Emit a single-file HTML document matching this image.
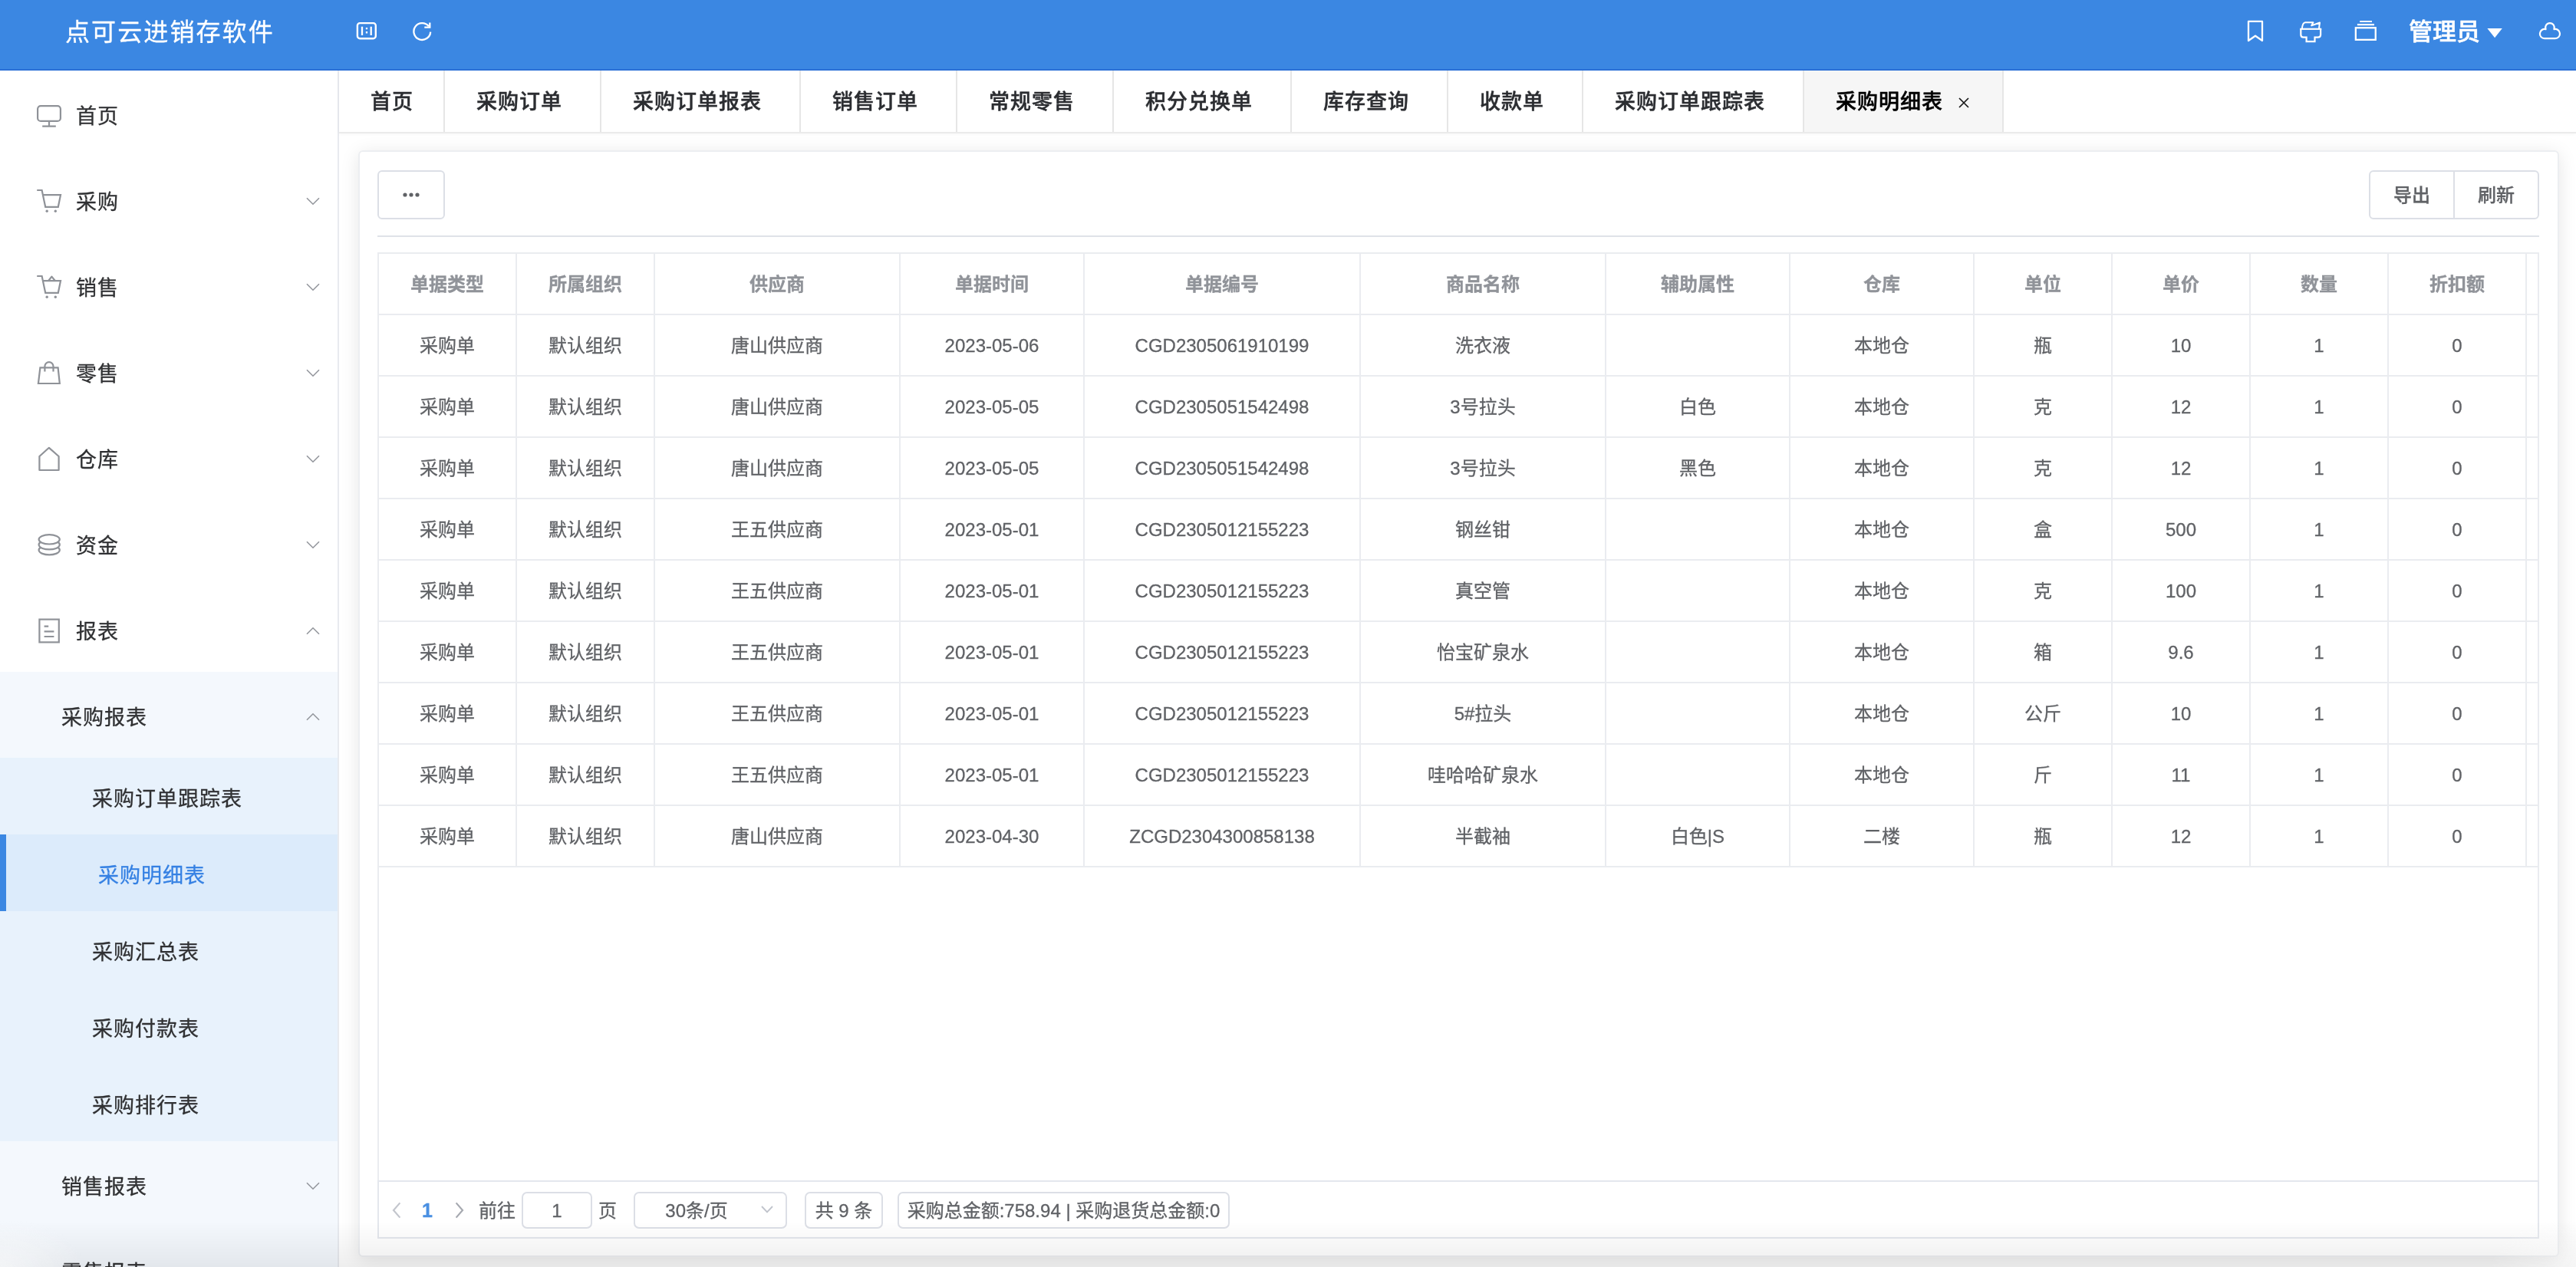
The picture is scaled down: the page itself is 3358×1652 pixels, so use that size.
<!DOCTYPE html>
<html lang="zh-CN">
<head>
<meta charset="utf-8">
<title>点可云进销存软件</title>
<style>
*{box-sizing:border-box;margin:0;padding:0}
html,body{width:3358px;height:1652px;overflow:hidden;background:#fff}
#hd,#sd,#tb,#tw,#pg,.btn{will-change:transform}
body{font-family:"Liberation Sans","Noto Sans CJK SC",sans-serif;color:#303133;position:relative;-webkit-text-stroke:.3px currentColor}
.abs{position:absolute}
svg{display:block;overflow:visible}

/* ---------- header ---------- */
#hd{position:absolute;left:0;top:0;width:3358px;height:92px;background:#3b87e2;border-bottom:2px solid #2a6fd6;z-index:5}
#hd .title{position:absolute;left:85px;top:0;height:84px;line-height:84px;font-size:32px;letter-spacing:2.1px;color:#fff;white-space:nowrap}
#hd .user{position:absolute;left:3140px;top:0;height:84px;line-height:84px;font-size:31px;font-weight:500;-webkit-text-stroke:.5px #fff;color:#fff;white-space:nowrap}
#hd .ic{position:absolute}

/* ---------- sidebar ---------- */
#sd{position:absolute;left:0;top:92px;width:442px;height:1560px;background:#fff;border-right:2px solid #e8eaef;overflow:hidden}
.mi{position:absolute;left:0;width:440px;height:112px;line-height:112px;font-size:27px;letter-spacing:1px;color:#303133;white-space:nowrap}
.mi .t{position:absolute;left:99px;top:4px}
.mi .ico{position:absolute;left:46px;top:40px;width:36px;height:36px}
.mi .arr{position:absolute;left:399px;top:53px;width:18px;height:11px}
.sub1{background:#f4f8fd}
.sub1 .t{left:80px}
.sub2{height:100px;line-height:100px;background:#e8f2fc}
.sub2 .t{left:120px}
.sub2.on{background:#dcebfb;color:#3580e3;border-left:8px solid #3b87e2}
.sub2.on .t{left:120px}

/* ---------- tabs ---------- */
#tb{position:absolute;left:442px;top:92px;width:2916px;height:82px;background:#fff;border-bottom:2px solid #ebebeb;box-shadow:0 1px 4px rgba(0,0,0,.04);z-index:3;white-space:nowrap;font-size:0}
.tab{display:inline-block;vertical-align:top;height:80px;line-height:81px;padding-top:1px;font-size:27px;letter-spacing:1px;font-weight:500;-webkit-text-stroke:.45px currentColor;color:#2b2d31;padding-left:41px;border-right:2px solid #e6e6e6;position:relative}
.tab.on{background:#f6f6f6;color:#000}
.tab .x{position:absolute;left:201px;top:35px;width:14px;height:14px}

/* ---------- main / card ---------- */
#mn{position:absolute;left:442px;top:174px;width:2916px;height:1478px;background:#fff}
#card{position:absolute;left:467px;top:196px;width:2869px;height:1443px;background:#fff;border:2px solid #eceef1;border-radius:6px;box-shadow:0 4px 24px rgba(0,0,0,.10);z-index:2}
.btn{position:absolute;height:64px;border:2px solid #dcdfe6;background:#fff;color:#606266;font-size:24px;font-weight:500;text-align:center;line-height:62px}
#hr{position:absolute;left:492px;top:307px;width:2818px;height:2px;background:#dfe2e8;z-index:3}

/* ---------- table ---------- */
#tw{position:absolute;left:492px;top:329px;width:2818px;height:1212px;border:2px solid #eaecf0;border-bottom:none;overflow:hidden;z-index:3;background:#fff}
table{border-collapse:separate;border-spacing:0;table-layout:fixed;width:2980px}
th,td{height:80px;border-right:2px solid #eaecf0;border-bottom:2px solid #eaecf0;text-align:center;font-size:24px;white-space:nowrap;overflow:hidden;padding:2px 0 0 0;line-height:76px}
th{color:#909399;font-weight:700}
td{color:#606266;font-weight:400}

/* ---------- pagination ---------- */
#pg{position:absolute;left:492px;top:1539px;width:2818px;height:76px;border:2px solid #e4e7ed;background:#fff;z-index:3;font-size:24px;color:#606266}
#pg .bx{position:absolute;top:13px;height:48px;border:2px solid #dcdfe6;border-radius:7px;line-height:45px;text-align:center;white-space:nowrap;background:#fff}
#pg .tx{position:absolute;top:0;height:75px;line-height:75px;white-space:nowrap}
@media (max-width:2000px){html{zoom:.5}}
#fade{position:absolute;left:0;top:1592px;width:3358px;height:60px;background:radial-gradient(ellipse 110px 64px at 0 100%,rgba(255,255,255,.55),rgba(255,255,255,0)),radial-gradient(ellipse 110px 64px at 100% 100%,rgba(255,255,255,.45),rgba(255,255,255,0)),linear-gradient(to bottom,rgba(0,0,0,0),rgba(0,0,0,.065));z-index:9;pointer-events:none}
</style>
</head>
<body>

<!-- HEADER -->
<div id="hd">
  <div class="title">点可云进销存软件</div>
    <svg class="ic" style="left:463px;top:27px" width="30" height="26" viewBox="0 0 30 26" fill="none" stroke="#fff" stroke-width="2.4"><rect x="2.9" y="3.1" width="23.9" height="20.1" rx="3.2"/><path d="M9 7.800v11.200M20.700 7.800v11.200" stroke-width="2.300"/><path d="M15 8.900v2.300M15 14.100v2.300" stroke-width="2.300"/></svg>
  <svg class="ic" style="left:536px;top:28px" width="28" height="28" viewBox="0 0 28 28" fill="none" stroke="#fff" stroke-width="2.300"><path d="M22.900 6.300A10.900 10.900 0 1 0 25.200 13.600"/><path d="M24.300 1.600v6h-7" stroke-linejoin="miter"/></svg>
  <svg class="ic" style="left:2928px;top:26px" width="24" height="30" viewBox="0 0 24 30" fill="none" stroke="#fff" stroke-width="2.300"><path d="M3 1.900h18v25.100l-9-6.300-9 6.300z" stroke-linejoin="round"/></svg>
  <svg class="ic" style="left:2996px;top:26px" width="32" height="30" viewBox="0 0 32 30" fill="none" stroke="#fff" stroke-width="2.200"><path d="M3.300 11.800V19.200Q3.300 22.700 6.800 22.700H10.600V28.100H21.500V22.700H25.600Q29.100 22.700 29.100 19.200V11.800"/><path d="M2.200 11.800H30.200"/><path d="M4.900 11.800C5.200 6.500 6.200 3.500 9.200 3.300L19.400 3.200L17.200 7.400L28 3.500C27.600 6 27.200 8.500 27 11.800" stroke-linejoin="round" stroke-width="2"/></svg>
  <svg class="ic" style="left:3068px;top:25px" width="32" height="30" viewBox="0 0 32 30" fill="none" stroke="#fff" stroke-width="2.300"><rect x="2.850" y="11.250" width="25.900" height="15.600"/><path d="M4.900 7.100h22.100M8.200 3h15.800" stroke-width="2.200"/></svg>
  <svg class="ic" style="left:3241px;top:36px" width="22" height="14" viewBox="0 0 22 14"><path d="M1.400 0.900h19.400L11.100 13.300z" fill="#fff"/></svg>
  <svg class="ic" style="left:3308px;top:28px" width="32" height="24" viewBox="0 0 32 24" fill="none" stroke="#fff" stroke-width="2.200"><path d="M9 22.170A6.100 6.100 0 1 1 10.510 10.160A5.850 5.850 0 1 1 21.390 10.160A6.100 6.100 0 1 1 22.900 22.170z" stroke-linejoin="round"/></svg>
  <div class="user">管理员</div>
</div>

<!-- SIDEBAR -->
<div id="sd">
<div class="mi" style="top:0px"><svg class="ico" viewBox="0 0 36 36" fill="none" stroke="#8f9298" stroke-width="2.2"><rect x="3.1" y="6.1" width="29.8" height="19.8" rx="4"/><path d="M18 26v6.4M9.2 32.6h17.6"/></svg><span class="t">首页</span></div>
<div class="mi" style="top:112px"><svg class="ico" viewBox="0 0 36 36" fill="none" stroke="#8f9298" stroke-width="2.2"><path d="M2.2 4h6.4l4.6 21.8h16.6l3.2-15.6H10"/><circle cx="15.2" cy="31.2" r="1.7" fill="#8f9298" stroke="none"/><circle cx="26.3" cy="31.2" r="1.7" fill="#8f9298" stroke="none"/></svg><span class="t">采购</span><svg class="arr" viewBox="0 0 18 11" fill="none" stroke="#94979d" stroke-width="1.600"><path d="M1 1.2l8 8 8-8"/></svg></div>
<div class="mi" style="top:224px"><svg class="ico" viewBox="0 0 36 36" fill="none" stroke="#8f9298" stroke-width="2.2"><path d="M2.2 4h6.4l4.6 21.8h16.6l3.2-15.6H10"/><path d="M17 10.2l4.4-5.6 4.6 5.6" stroke-linejoin="round"/><circle cx="15.2" cy="31.2" r="1.7" fill="#8f9298" stroke="none"/><circle cx="26.3" cy="31.2" r="1.7" fill="#8f9298" stroke="none"/></svg><span class="t">销售</span><svg class="arr" viewBox="0 0 18 11" fill="none" stroke="#94979d" stroke-width="1.600"><path d="M1 1.2l8 8 8-8"/></svg></div>
<div class="mi" style="top:336px"><svg class="ico" viewBox="0 0 36 36" fill="none" stroke="#8f9298" stroke-width="2.2"><path d="M6.4 11.4h23.2l2.2 20.6H3.9z"/><path d="M12.4 16.4V9.6a5.55 5.55 0 0 1 11.1 0v6.8"/></svg><span class="t">零售</span><svg class="arr" viewBox="0 0 18 11" fill="none" stroke="#94979d" stroke-width="1.600"><path d="M1 1.2l8 8 8-8"/></svg></div>
<div class="mi" style="top:448px"><svg class="ico" viewBox="0 0 36 36" fill="none" stroke="#8f9298" stroke-width="2.2"><path d="M17.9 3.8L5.4 15v18h25.2V15z" stroke-linejoin="round"/></svg><span class="t">仓库</span><svg class="arr" viewBox="0 0 18 11" fill="none" stroke="#94979d" stroke-width="1.600"><path d="M1 1.2l8 8 8-8"/></svg></div>
<div class="mi" style="top:560px"><svg class="ico" viewBox="0 0 36 36" fill="none" stroke="#8f9298" stroke-width="2.2"><ellipse cx="18.2" cy="11.3" rx="13.6" ry="6.2"/><path d="M6.940 14.780A13.600 6.200 0 1 0 29.460 14.780M6.940 21.730A13.600 6.200 0 1 0 29.460 21.730"/></svg><span class="t">资金</span><svg class="arr" viewBox="0 0 18 11" fill="none" stroke="#94979d" stroke-width="1.600"><path d="M1 1.2l8 8 8-8"/></svg></div>
<div class="mi" style="top:672px"><svg class="ico" viewBox="0 0 36 36" fill="none" stroke="#8f9298" stroke-width="2.2"><rect x="5.4" y="3.6" width="25.4" height="29.8"/><path d="M11.6 12.6h5.6M11.6 19.4h12.8M11.6 26h12.8"/></svg><span class="t">报表</span><svg class="arr" viewBox="0 0 18 11" fill="none" stroke="#94979d" stroke-width="1.600"><path d="M1 9.8l8-8 8 8"/></svg></div>
<div class="mi sub1" style="top:784px"><span class="t">采购报表</span><svg class="arr" viewBox="0 0 18 11" fill="none" stroke="#94979d" stroke-width="1.600"><path d="M1 9.8l8-8 8 8"/></svg></div>
<div class="mi sub2" style="top:896px"><span class="t">采购订单跟踪表</span></div>
<div class="mi sub2 on" style="top:996px"><span class="t">采购明细表</span></div>
<div class="mi sub2" style="top:1096px"><span class="t">采购汇总表</span></div>
<div class="mi sub2" style="top:1196px"><span class="t">采购付款表</span></div>
<div class="mi sub2" style="top:1296px"><span class="t">采购排行表</span></div>
<div class="mi sub1" style="top:1396px"><span class="t">销售报表</span><svg class="arr" viewBox="0 0 18 11" fill="none" stroke="#94979d" stroke-width="1.600"><path d="M1 1.2l8 8 8-8"/></svg></div>
<div class="mi sub1" style="top:1508px"><span class="t">零售报表</span><svg class="arr" viewBox="0 0 18 11" fill="none" stroke="#94979d" stroke-width="1.600"><path d="M1 1.2l8 8 8-8"/></svg></div>

</div>

<!-- TABS -->
<div id="tb">
<div class="tab" style="width:138px">首页</div><div class="tab" style="width:204px">采购订单</div><div class="tab" style="width:260px">采购订单报表</div><div class="tab" style="width:204px">销售订单</div><div class="tab" style="width:204px">常规零售</div><div class="tab" style="width:232px">积分兑换单</div><div class="tab" style="width:204px">库存查询</div><div class="tab" style="width:176px">收款单</div><div class="tab" style="width:288px">采购订单跟踪表</div><div class="tab on" style="width:260px">采购明细表<svg class="x" viewBox="0 0 14 14" fill="none" stroke="#1a1a1a" stroke-width="1.7"><path d="M1 1l12 12M13 1L1 13"/></svg></div>

</div>

<div id="mn"></div>
<div id="card"></div>

<div class="btn" style="left:492px;top:222px;width:88px;border-radius:6px;z-index:3"><svg style="position:absolute;left:31px;top:27px" width="22" height="6" viewBox="0 0 22 6"><circle cx="3" cy="3" r="2.6" fill="#606266"/><circle cx="11" cy="3" r="2.6" fill="#606266"/><circle cx="19" cy="3" r="2.6" fill="#606266"/></svg></div>
<div class="btn" style="left:3088px;top:222px;width:112px;border-radius:6px 0 0 6px;z-index:3">导出</div>
<div class="btn" style="left:3198px;top:222px;width:112px;border-radius:0 6px 6px 0;z-index:3">刷新</div>

<div id="hr"></div>

<div id="tw">
<table><colgroup><col style="width:180px"><col style="width:180px"><col style="width:320px"><col style="width:240px"><col style="width:360px"><col style="width:320px"><col style="width:240px"><col style="width:240px"><col style="width:180px"><col style="width:180px"><col style="width:180px"><col style="width:180px"><col style="width:180px"></colgroup>
<thead><tr><th>单据类型</th><th>所属组织</th><th>供应商</th><th>单据时间</th><th>单据编号</th><th>商品名称</th><th>辅助属性</th><th>仓库</th><th>单位</th><th>单价</th><th>数量</th><th>折扣额</th><th></th></tr></thead>
<tbody>
<tr><td>采购单</td><td>默认组织</td><td>唐山供应商</td><td>2023-05-06</td><td>CGD2305061910199</td><td>洗衣液</td><td></td><td>本地仓</td><td>瓶</td><td>10</td><td>1</td><td>0</td><td></td></tr>
<tr><td>采购单</td><td>默认组织</td><td>唐山供应商</td><td>2023-05-05</td><td>CGD2305051542498</td><td>3号拉头</td><td>白色</td><td>本地仓</td><td>克</td><td>12</td><td>1</td><td>0</td><td></td></tr>
<tr><td>采购单</td><td>默认组织</td><td>唐山供应商</td><td>2023-05-05</td><td>CGD2305051542498</td><td>3号拉头</td><td>黑色</td><td>本地仓</td><td>克</td><td>12</td><td>1</td><td>0</td><td></td></tr>
<tr><td>采购单</td><td>默认组织</td><td>王五供应商</td><td>2023-05-01</td><td>CGD2305012155223</td><td>钢丝钳</td><td></td><td>本地仓</td><td>盒</td><td>500</td><td>1</td><td>0</td><td></td></tr>
<tr><td>采购单</td><td>默认组织</td><td>王五供应商</td><td>2023-05-01</td><td>CGD2305012155223</td><td>真空管</td><td></td><td>本地仓</td><td>克</td><td>100</td><td>1</td><td>0</td><td></td></tr>
<tr><td>采购单</td><td>默认组织</td><td>王五供应商</td><td>2023-05-01</td><td>CGD2305012155223</td><td>怡宝矿泉水</td><td></td><td>本地仓</td><td>箱</td><td>9.6</td><td>1</td><td>0</td><td></td></tr>
<tr><td>采购单</td><td>默认组织</td><td>王五供应商</td><td>2023-05-01</td><td>CGD2305012155223</td><td>5#拉头</td><td></td><td>本地仓</td><td>公斤</td><td>10</td><td>1</td><td>0</td><td></td></tr>
<tr><td>采购单</td><td>默认组织</td><td>王五供应商</td><td>2023-05-01</td><td>CGD2305012155223</td><td>哇哈哈矿泉水</td><td></td><td>本地仓</td><td>斤</td><td>11</td><td>1</td><td>0</td><td></td></tr>
<tr><td>采购单</td><td>默认组织</td><td>唐山供应商</td><td>2023-04-30</td><td>ZCGD2304300858138</td><td>半截袖</td><td>白色|S</td><td>二楼</td><td>瓶</td><td>12</td><td>1</td><td>0</td><td></td></tr>
</tbody></table>

</div>

<div id="pg">
<svg class="abs" style="left:17px;top:26px" width="12" height="22" viewBox="0 0 12 22" fill="none" stroke="#c3c6cd" stroke-width="2.200"><path d="M10.400 1.400L2 11l8.400 9.600"/></svg>
<div class="tx" style="left:43px;width:40px;text-align:center;color:#4a90e2;font-weight:700;font-size:25px">1</div>
<svg class="abs" style="left:99px;top:26px" width="12" height="22" viewBox="0 0 12 22" fill="none" stroke="#a6a9b0" stroke-width="2.200"><path d="M1.600 1.400L10 11l-8.400 9.600"/></svg>
<div class="tx" style="left:130px">前往</div>
<div class="bx" style="left:186px;width:92px">1</div>
<div class="tx" style="left:286px">页</div>
<div class="bx" style="left:332px;width:200px"><span style="position:absolute;left:0;width:160px;text-align:center">30条/页</span><svg class="abs" style="left:164px;top:16px" width="16" height="10" viewBox="0 0 16 10" fill="none" stroke="#c0c4cc" stroke-width="1.900"><path d="M1 1l7 7.400L15 1"/></svg></div>
<div class="bx" style="left:555px;width:102px">共 9 条</div>
<div class="bx" style="left:676px;width:433px">采购总金额:758.94 | 采购退货总金额:0</div>
</div>
<div id="fade"></div>
</body>
</html>
